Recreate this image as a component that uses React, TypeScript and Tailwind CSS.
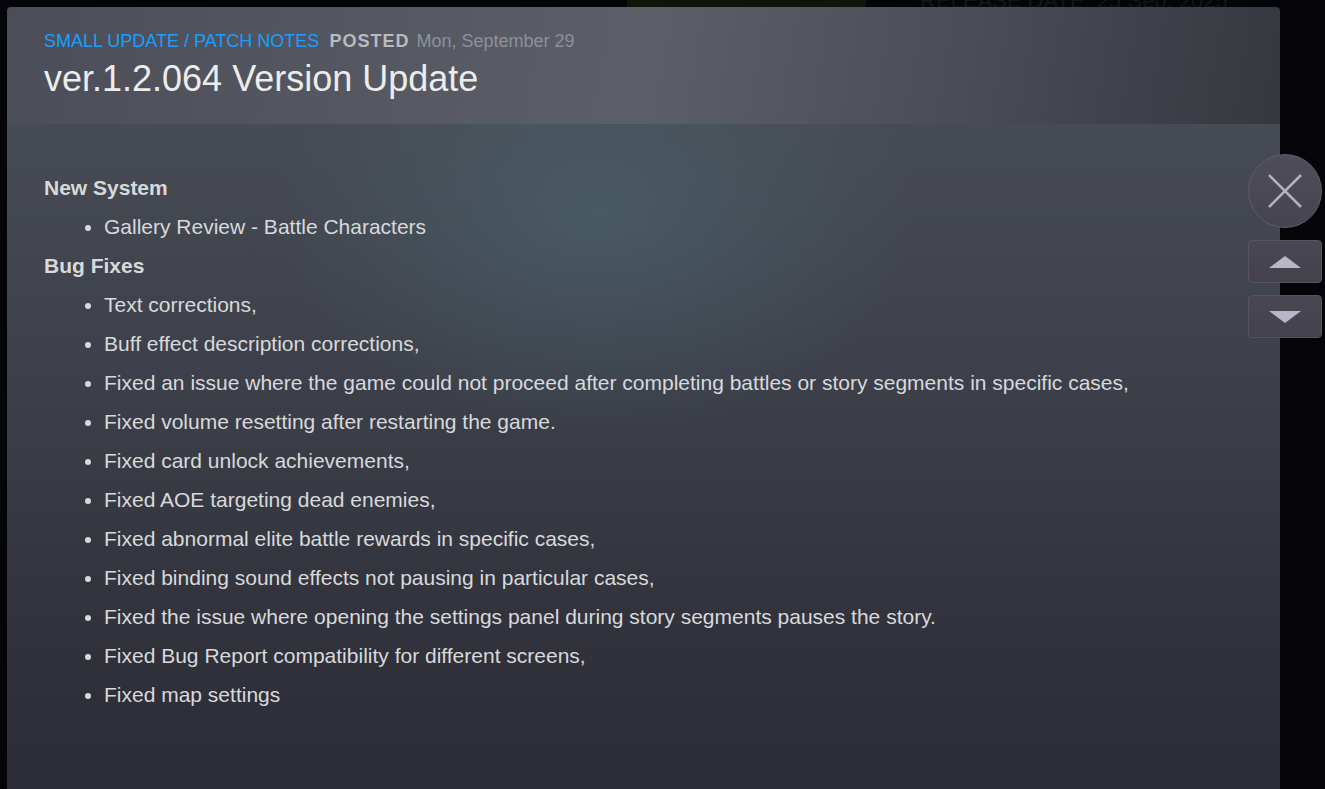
import React from "react";

const newSystem = ["Gallery Review - Battle Characters"];

const bugFixes = [
  "Text corrections,",
  "Buff effect description corrections,",
  "Fixed an issue where the game could not proceed after completing battles or story segments in specific cases,",
  "Fixed volume resetting after restarting the game.",
  "Fixed card unlock achievements,",
  "Fixed AOE targeting dead enemies,",
  "Fixed abnormal elite battle rewards in specific cases,",
  "Fixed binding sound effects not pausing in particular cases,",
  "Fixed the issue where opening the settings panel during story segments pauses the story.",
  "Fixed Bug Report compatibility for different screens,",
  "Fixed map settings",
];

const Section = ({ title, items }: { title: string; items: string[] }) => (
  <>
    <p className="font-bold">{title}</p>
    <ul className="list-disc pl-[60px]">
      {items.map((t) => (
        <li key={t}>{t}</li>
      ))}
    </ul>
  </>
);

const App = () => {
  return (
    <div
      className="relative w-[1325px] h-[789px] overflow-hidden bg-[#050509] flex"
      style={{ fontFamily: "Arial, 'Liberation Sans', sans-serif" }}
    >
      {/* faint page behind the overlay */}
      <div className="absolute left-[627px] top-0 w-[239px] h-[7px] bg-[#10150a]" />
      <div className="absolute left-[920px] top-[-12px] text-[22px] leading-[26px] text-[#14151b]">
        RELEASE DATE: 25 Sep, 2025
      </div>

      <div className="relative ml-[7px] mt-[7px] w-[1273px] flex flex-col rounded-t-[4px] overflow-hidden">
        <div className="h-[117px] px-[37px] pt-[23px] bg-[linear-gradient(100deg,#4b4e58_0%,#575a63_35%,#5c5f68_50%,#4a4c56_75%,#363840_100%)]">
          <div className="flex items-baseline text-[18px] leading-[22px]">
            <span className="text-[#1a9fff]">SMALL UPDATE / PATCH NOTES</span>
            <span className="ml-[10px] font-bold text-[#b8bcbf] tracking-[1px]">POSTED</span>
            <span className="ml-[7px] text-[#8b929a]">Mon, September 29</span>
          </div>
          <h1 className="mt-[7px] text-[36px] leading-[40px] text-[#ececec]">ver.1.2.064 Version Update</h1>
        </div>

        <div className="flex-1 px-[37px] pt-[44px] text-[21px] leading-[39px] text-[#d8d9db] bg-[radial-gradient(ellipse_320px_220px_at_590px_90px,rgba(78,108,118,0.5),transparent),linear-gradient(180deg,#474b54_0%,#3e414b_35%,#30313a_80%,#2b2c35_100%)]">
          <Section title="New System" items={newSystem} />
          <Section title="Bug Fixes" items={bugFixes} />
        </div>
      </div>

      {/* side controls over the modal edge */}
      <div className="absolute left-[1248px] top-[154px] flex flex-col gap-[12px] w-[74px]">
        <button className="w-[74px] h-[74px] rounded-full bg-[linear-gradient(180deg,#4e4d58,#45444f)] border border-[#5d5c68] flex items-center justify-center">
          <svg width="38" height="38" viewBox="0 0 38 38">
            <path d="M3 3 L35 35 M35 3 L3 35" stroke="#b3b2bf" strokeWidth="2.5" />
          </svg>
        </button>
        <button className="h-[43px] rounded-[4px] bg-[linear-gradient(180deg,#484752,#42414c)] border border-[#56555f] flex items-center justify-center">
          <svg width="32" height="12" viewBox="0 0 32 12">
            <path d="M0 12 L16 0 L32 12 Z" fill="#b8b7c8" />
          </svg>
        </button>
        <button className="h-[43px] rounded-[4px] bg-[linear-gradient(180deg,#484752,#42414c)] border border-[#56555f] flex items-center justify-center">
          <svg width="32" height="12" viewBox="0 0 32 12">
            <path d="M0 0 L16 12 L32 0 Z" fill="#b8b7c8" />
          </svg>
        </button>
      </div>
    </div>
  );
};

export default App;
